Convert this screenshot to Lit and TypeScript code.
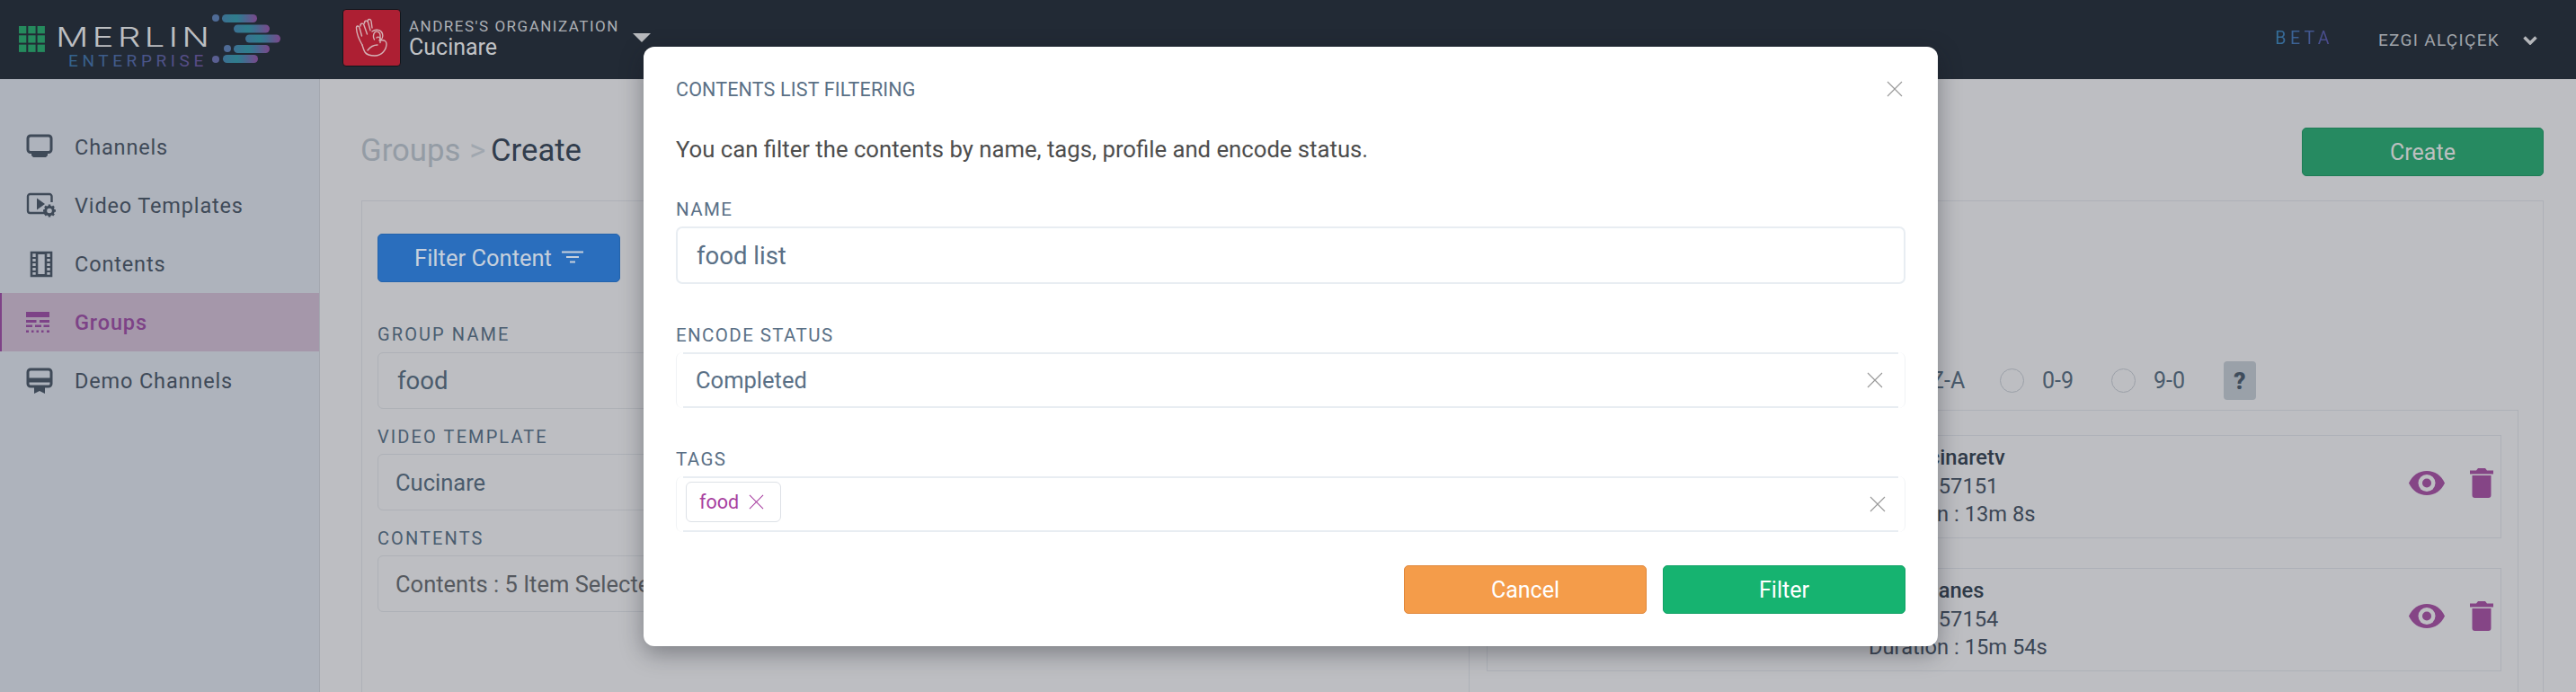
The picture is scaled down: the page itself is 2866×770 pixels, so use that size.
import { LitElement, html, css, svg } from "lit";
import { customElement } from "lit/decorators.js";

const xIcon = (size: number, color: string) => html`<svg width=${size} height=${size} viewBox="0 0 18 18" fill="none" stroke=${color} stroke-width="1.1"><path d="M1 1L17 17M17 1L1 17"/></svg>`;

const navIcons: Record<string, any> = {
  monitor: svg`<rect x="2" y="2" width="26" height="18.5" rx="3" fill="none" stroke="currentColor" stroke-width="3"/><path d="M6 21.5h18v2.5l-2 2H8l-2-2z" fill="currentColor"/>`,
  video: svg`<path d="M21 23H4.5A2.5 2.5 0 0 1 2 20.500V4.500A2.500 2.500 0 0 1 4.500 2H26a2.500 2.500 0 0 1 2.500 2.500V11" fill="none" stroke="currentColor" stroke-width="2.400"/><path d="M12 6.500l9 6.500-9 6.500z" fill="currentColor"/><circle cx="26" cy="20.500" r="4.300" fill="none" stroke="currentColor" stroke-width="3"/><path d="M26 13.500v3M26 24.500v3M19 20.500h3M30 20.500h3M21 15.500l2.200 2.200M28.800 23.300l2.200 2.200M31 15.500l-2.200 2.200M23.200 23.300L21 25.500" stroke="currentColor" stroke-width="2.600"/>`,
  film: svg`<path d="M2 2h22v26H2z" fill="none" stroke="currentColor" stroke-width="2.600"/><path d="M8 1v28M18 1v28" stroke="currentColor" stroke-width="2.600"/><path d="M2 8h6M2 13h6M2 18h6M2 23h6M18 8h6M18 13h6M18 18h6M18 23h6" stroke="currentColor" stroke-width="2"/><rect x="8" y="1" width="10" height="3" fill="currentColor"/><rect x="8" y="26" width="10" height="3" fill="currentColor"/>`,
  groups: svg`<rect x="0" y="0" width="26" height="6" fill="currentColor"/><rect x="0" y="9" width="11.500" height="3" fill="currentColor"/><rect x="15" y="9" width="11" height="3" fill="currentColor"/><rect x="0" y="14.500" width="7" height="2.500" fill="currentColor"/><rect x="10" y="14.500" width="7" height="2.500" fill="currentColor"/><rect x="19.500" y="14.500" width="6.500" height="2.500" fill="currentColor"/><path d="M0 20.500h3v2.500H0zM6 20.500h2.500v2.500H6zM11.500 20.500H14v2.500h-2.500zM17 20.500h2.500v2.500H17zM23 20.500h3v2.500h-3z" fill="currentColor"/>`,
  demo: svg`<rect x="2" y="2" width="26" height="19" rx="3" fill="none" stroke="currentColor" stroke-width="3"/><rect x="2" y="11.500" width="26" height="5" fill="currentColor"/><path d="M9 21h12v8l-6-3-6 3z" fill="currentColor"/>`,
};

const eye = svg`<path d="M0 13.500C4 5 11 0 20 0s16 5 20 13.500C36 22 29 27 20 27S4 22 0 13.500z" fill="currentColor"/><circle cx="20" cy="13.500" r="9.500" fill="#bdbec2"/><circle cx="20" cy="13.500" r="5" fill="currentColor"/>`;
const trash = svg`<path d="M9 0h8l2 2.500h7v4H0v-4h7zM2.500 8h21v22a3 3 0 0 1-3 3h-15a3 3 0 0 1-3-3z" fill="currentColor"/>`;

@customElement("app-root")
class AppRoot extends LitElement {
  static styles = css`
    :host { display: block; position: relative; width: 2866px; height: 770px; overflow: hidden; font-family: Roboto, "Noto Sans", sans-serif; background: #bdbec2; }
    * { box-sizing: border-box; }
    .top { height: 88px; background: #222a35; display: flex; align-items: flex-start; position: relative; }
    .brand { width: 381px; height: 88px; flex: none; display: block; }
    .m { font: 300 30px Inter, sans-serif; fill: #bcbec1; }
    .e { font: 400 19px Roboto, sans-serif; letter-spacing: 4.600px; }
    .org-logo { width: 65px; height: 64px; margin-top: 10px; background: #ad1f33; border: 1px solid #11161c; border-radius: 4px; flex: none; display: flex; align-items: center; justify-content: center; }
    .org { margin-left: 9px; margin-top: 19px; width: 249px; flex: none; }
    .org small { display: block; font-size: 17px; line-height: 20px; letter-spacing: 1.500px; color: #adb0b5; white-space: nowrap; }
    .org b { display: block; font-weight: 400; font-size: 25px; line-height: 28px; color: #c0c2c5; }
    .tri { width: 0; height: 0; margin-top: 37px; border-left: 10px solid transparent; border-right: 10px solid transparent; border-top: 10px solid #b8babe; flex: none; }
    .spacer { flex: 1; }
    .beta { margin-top: 32px; font-size: 19.500px; line-height: 22px; letter-spacing: 4.400px; background: linear-gradient(90deg, #33709a, #4d4689); -webkit-background-clip: text; background-clip: text; color: transparent; }
    .user { margin-left: 50px; margin-top: 34px; font-size: 19px; line-height: 22px; letter-spacing: 1.300px; color: #a0a4aa; white-space: nowrap; }
    .chev { margin: 40px 43px 0 26px; display: block; }
    .body { display: flex; height: 682px; }
    .side { width: 356px; flex: none; background: #aeb3bc; border-right: 1px solid #a4a8b0; padding-top: 44px; }
    .nav { height: 64.800px; display: flex; align-items: center; color: #3f4a58; font-size: 23.500px; letter-spacing: .85px; padding-left: 29px; }
    .nav svg { width: 33px; height: 30px; flex: none; margin-right: 21px; }
    .nav.on { background: #a597aa; color: #7d4387; font-weight: 500; box-shadow: inset 2px 0 0 #7e4287; }
    .main { flex: 1; min-width: 0; padding: 54px 36px 0 47px; }
    .head { display: flex; justify-content: space-between; align-items: center; height: 54px; }
    .crumb { font-size: 34.700px; color: #949ca5; margin: -4px 0 0 -2px; display: flex; }
    .crumb i { font-style: normal; color: #a0a7af; margin: 0 5.500px 0 10px; }
    .crumb b { font-weight: 400; color: #313d4d; }
    .btn { height: 54px; border-radius: 5px; display: flex; align-items: center; justify-content: center; font-size: 25px; }
    .create { width: 269px; background: #268a61; border: 1px solid #1e7c56; color: #bdc0c0; }
    .panel { margin-top: 27px; height: 700px; border: 1px solid #aeb1b8; display: flex; margin-left: -1px; }
    .left { width: 1231px; flex: none; padding: 36px 24px 0 17px; }
    .fbtn { width: 270px; background: #2a6ebd; border: 1px solid #2564ac; color: #c6d0dc; gap: 11px; font-size: 25.500px; }
    .lab { font-size: 20px; line-height: 24px; letter-spacing: 2.100px; color: #4a5d70; }
    .first { margin-top: 46px; }
    .field { height: 63px; border: 1px solid #aeb1b7; border-radius: 6px; display: flex; align-items: center; margin: 7px 0 0; padding-left: 19px; font-size: 25.500px; color: #4a5b6c; }
    .lab.next { margin-top: 19px; }
    .field.name { font-size: 27.500px; padding-left: 21px; margin-top: 8px; }
    .field.gr { color: #55595f; }
    .right { flex: 1; min-width: 0; margin-right: 27px; }
    .sort { height: 43px; margin-top: 178px; display: flex; align-items: center; padding-left: 343px; font-size: 25px; color: #4a5b6c; }
    .radio { width: 27px; height: 27px; border: 1px solid #9ba0a8; border-radius: 50%; margin-right: 20px; flex: none; }
    .sort span { width: 77px; flex: none; }
    .q { width: 36px; height: 43px; background: #9aa1a9; border-radius: 4px; color: #3f4d5c; font-weight: 900; font-size: 26px; display: flex; align-items: center; justify-content: center; margin-left: 1px; flex: none; }
    .list { margin-top: 11px; height: 400px; border: 1px solid #aeb1b8; padding: 27px 18px 0 19px; }
    .card { height: 115px; border: 1px solid #aeb1b8; margin-bottom: 33px; display: flex; align-items: center; padding-left: 424px; font-size: 23.700px; line-height: 31.500px; color: #3b4655; }
    .card .t { flex: 1; min-width: 0; white-space: nowrap; }
    .card .t b { font-weight: 500; display: block; color: #2f3a48; }
    .card .t div { display: block; }
    .acts { display: flex; align-items: center; gap: 28px; padding-right: 8px; margin-bottom: 8px; color: #854586; }
    .overlay-modal { position: absolute; left: 716px; top: 52px; width: 1440px; height: 667px; background: #fff; border-radius: 12px; box-shadow: 0 8px 26px rgba(20, 24, 32, .38); padding: 36px; color: #5a7086; }
    .mh { display: flex; justify-content: space-between; align-items: center; height: 22px; font-size: 21.500px; letter-spacing: .15px; }
    .mh svg { margin-right: 3px; }
    .desc { margin-top: 41px; font-size: 25.700px; line-height: 30px; color: #4d4d4d; }
    .ml { font-size: 20.500px; line-height: 22px; letter-spacing: 1.400px; color: #5a7086; }
    .ml.a { margin-top: 41px; }
    .ml.b { margin-top: 46px; }
    .ml.c { margin-top: 46px; }
    .inp { height: 64px; margin-top: 8px; border: 2px solid #e8edf2; border-radius: 7px; font-size: 27.500px; display: flex; align-items: center; padding-left: 21px; color: #5a7086; }
    .sel { height: 62px; margin-top: 8px; position: relative; display: flex; align-items: center; padding: 0 24px 0 21px; font-size: 25.500px; border-left: 1px solid #f1f3f5; border-right: 1px solid #f1f3f5; border-radius: 7px; justify-content: space-between; }
    .sel::before { content: ""; position: absolute; left: 7px; right: 7px; top: 0; bottom: 0; border-top: 2px solid #e8edf2; border-bottom: 2px solid #e8edf2; pointer-events: none; }
    .sel.tags { padding: 0 21px 0 10px; }
    .chip { height: 45px; width: 106px; margin-bottom: 5px; border: 1px solid #dde1e7; border-radius: 6px; display: flex; align-items: center; padding-left: 14px; gap: 11px; color: #a83fa0; font-size: 21.500px; }
    .foot { margin-top: 37px; display: flex; justify-content: flex-end; gap: 18px; }
    .cancel, .go { width: 270px; color: #fff; }
    .cancel { background: #f49c4a; border: 1px solid #e0873a; }
    .go { background: #16b370; border: 1px solid #12a266; }
  `;

  render() {
    const nav = [["monitor", "Channels"], ["video", "Video Templates"], ["film", "Contents"], ["groups", "Groups"], ["demo", "Demo Channels"]];
    const pillRows = [[247, 286, 16], [260, 300, 27.5], [273, 312, 38.5], [260, 300, 50], [248, 287, 61]];
    const grid = [0, 1, 2].flatMap((r) => [0, 1, 2].map((c) => [21 + c * 10.3, 29 + r * 10.3]));
    return html`
      <div class="top">
        <svg class="brand" viewBox="0 0 381 88">
          <defs>
            <linearGradient id="pg"><stop offset="0" stop-color="#3c6f92"/><stop offset=".4" stop-color="#2f7d8c"/><stop offset=".55" stop-color="#3a7290"/><stop offset="1" stop-color="#7b478b"/></linearGradient>
            <linearGradient id="eg" gradientUnits="userSpaceOnUse" x1="77" x2="228" y1="0" y2="0"><stop offset="0" stop-color="#33648e"/><stop offset="1" stop-color="#5c4a86"/></linearGradient>
          </defs>
          ${grid.map(([x, y]) => svg`<rect x=${x} y=${y} width="8.300" height="8.300" fill="#258a5d"/>`)}
          <text class="m" x="62" y="52" textLength="175" lengthAdjust="spacingAndGlyphs" letter-spacing="3">MERLIN</text>
          <text class="e" x="76" y="74" fill="url(#eg)">ENTERPRISE</text>
          ${pillRows.map(([a, b, y]) => svg`<rect x=${a} y=${y} width=${b - a} height="9" rx="4.500" fill="url(#pg)"/>`)}
          <circle cx="240" cy="20" r="4" fill="#4f6b96"/><circle cx="253" cy="54" r="4" fill="#4f6b96"/><circle cx="240" cy="66" r="4" fill="#5a5f92"/>
        </svg>
        <div class="org-logo">
          <svg width="38" height="44" viewBox="0 0 38 44" fill="none" stroke="#d5b2b6" stroke-width="1.400" stroke-linecap="round" stroke-linejoin="round">
            <path d="M8 30C5 25 2 18 1.500 11.500c-.3-3 2.800-3.500 3.500-.5l2.500 9"/>
            <path d="M6 9c-.5-3 3-4 4-1l3.500 10"/>
            <path d="M10.500 6c-.5-3 3-4 4-1.200l2.500 9"/>
            <path d="M14 4c0-3 3.500-3.500 4-.5l1 7.500"/>
            <path d="M19 15c4-3 10-2 11.500 2.500 1 3.500-.5 6.500-3.500 7.500"/>
            <path d="M21.500 24c-1.500-2-1.500-6 .5-8 2.500-2 6 0 6 3v8.500"/>
            <path d="M24 22c2-2 4 0 4 2"/>
            <path d="M28 25c5-1 7 1 7 4 0 6-5 13-13 13-5 0-9-1-11-4-1.500-2.500-2-5-3-8"/>
            <path d="M14 36c3-4 7-6 11-6"/>
          </svg>
        </div>
        <div class="org"><small>ANDRES'S ORGANIZATION</small><b>Cucinare</b></div>
        <div class="tri"></div>
        <div class="spacer"></div>
        <div class="beta">BETA</div>
        <div class="user">EZGI ALÇIÇEK</div>
        <svg class="chev" width="16" height="10" viewBox="0 0 16 10" fill="none" stroke="#b4b6ba" stroke-width="3.500"><path d="M1.500 1.500L8 8l6.500-6.500"/></svg>
      </div>
      <div class="body">
        <div class="side">
          ${nav.map(([k, t]) => html`<div class="nav ${t === "Groups" ? "on" : ""}"><svg viewBox=${k === "groups" ? "0 -3 33 30" : k === "film" ? "-4 0 33 30" : "0 0 33 30"}>${navIcons[k]}</svg>${t}</div>`)}
        </div>
        <div class="main">
          <div class="head">
            <div class="crumb">Groups<i>&gt;</i><b>Create</b></div>
            <div class="btn create">Create</div>
          </div>
          <div class="panel">
            <div class="left">
              <div class="btn fbtn">Filter Content
                <svg width="24" height="18" viewBox="0 0 24 18" fill="none" stroke="#c6d0dc" stroke-width="1.800"><path d="M0 2.500h24M5 8h14M9 13.500h6"/></svg>
              </div>
              <div class="lab first">GROUP NAME</div>
              <div class="field name">food</div>
              <div class="lab next">VIDEO TEMPLATE</div>
              <div class="field">Cucinare</div>
              <div class="lab next">CONTENTS</div>
              <div class="field gr">Contents : 5 Item Selected</div>
            </div>
            <div class="right">
              <div class="sort">
                <div class="radio"></div><span>A-Z</span>
                <div class="radio"></div><span>Z-A</span>
                <div class="radio"></div><span>0-9</span>
                <div class="radio"></div><span>9-0</span>
                <div class="q">?</div>
              </div>
              <div class="list">
                ${[["My Cucinaretv", "57151", "13m 8s"], ["My Italianes", "57154", "15m 54s"]].map(([n, id, d]) => html`
                  <div class="card">
                    <div class="t"><b>${n}</b><div>Video : ${id}</div><div>Duration : ${d}</div></div>
                    <div class="acts">
                      <svg width="40" height="27" viewBox="0 0 40 27">${eye}</svg>
                      <svg width="26" height="33" viewBox="0 0 26 33">${trash}</svg>
                    </div>
                  </div>`)}
              </div>
            </div>
          </div>
        </div>
      </div>
      <div class="overlay-modal">
        <div class="mh"><span>CONTENTS LIST FILTERING</span>${xIcon(18, "#999")}</div>
        <div class="desc">You can filter the contents by name, tags, profile and encode status.</div>
        <div class="ml a">NAME</div>
        <div class="inp">food list</div>
        <div class="ml b">ENCODE STATUS</div>
        <div class="sel">Completed ${xIcon(18, "#999")}</div>
        <div class="ml c">TAGS</div>
        <div class="sel tags"><div class="chip">food ${xIcon(17, "#a83fa0")}</div>${xIcon(18, "#999")}</div>
        <div class="foot"><div class="btn cancel">Cancel</div><div class="btn go">Filter</div></div>
      </div>
    `;
  }
}
